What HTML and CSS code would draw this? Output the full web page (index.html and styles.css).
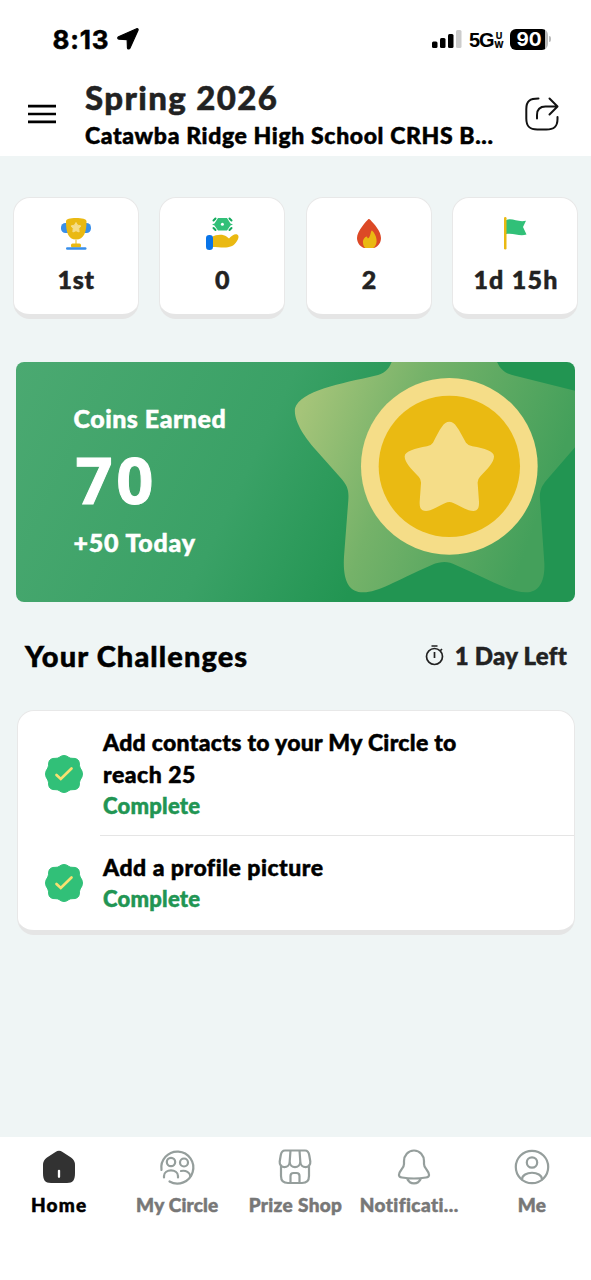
FILE: index.html
```html
<!DOCTYPE html>
<html lang="en">
<head>
<meta charset="utf-8">
<title>Spring 2026</title>
<link rel="stylesheet" href="styles.css">
</head>
<body>
<div class="app">
  <div class="status">
    <span class="time">8:13</span>
    <svg class="loc" width="22" height="22" viewBox="0 0 23 23"><path d="M20.500.7 1.600 9.200C.3 9.900.5 11.600 2 11.800l8.600.3.3 8.600c.2 1.500 2 1.700 2.600.4L22 2.400C22.500 1.100 21.600.3 20.500.7Z" stroke="#000" stroke-width="1.200"/></svg>
    <svg class="signal" width="30" height="20" viewBox="0 0 30 20"><rect x="0" y="12.500" width="5.500" height="6.500" rx="1.500"/><rect x="8" y="9" width="5.500" height="10" rx="1.500"/><rect x="16" y="5" width="5.500" height="14" rx="1.500"/><rect x="24" y="1" width="5.500" height="18" rx="1.500" fill="#ccc"/></svg>
    <span class="net">5G</span>
    <span class="uw"><span>U</span><span>W</span></span>
    <span class="battery">90</span>
    <span class="nub"></span>
  </div>
  <header class="header">
    <svg class="menu" width="28" height="20" viewBox="0 0 28 20"><path d="M0 2.200h28M0 10h28M0 17.800h28" stroke="#000" stroke-width="2.700"/></svg>
    <div class="titles">
      <h1 class="title">Spring 2026</h1>
      <div class="school">Catawba Ridge High School CRHS B...</div>
    </div>
    <svg class="share" width="34" height="34" viewBox="0 0 34 34" fill="none" stroke="#111" stroke-width="2" stroke-linecap="round" stroke-linejoin="round"><path d="M13.500 1.600C5 1.600 1.300 4 1.300 12v9.500c0 8 3.200 11 11 11h9c7.500 0 11.200-2.500 11.200-10.500v-2"/><path d="M12 21.500v-3.500c0-5.500 3-8.500 8.500-8.500h11.700M24.500 1.500l8 8-8 8"/></svg>
  </header>
  <main class="main">
    <section class="stats">
      <div class="stat">
        <svg width="34" height="34" viewBox="0 0 34 34"><rect x="2" y="7" width="30" height="10" rx="4.500" fill="#398fea"/><path d="M7 5.500C7 2.800 11 2 17 2s10.500.8 10.500 3.500C27.500 16 25 23.500 17 23.500S7 16 7 5.500Z" fill="#eab912"/><path d="M17 6.500l1.600 2.700 3.300.7-2.100 2.600.3 3.500-3.100-1.300-3.100 1.300.3-3.500-2.100-2.600 3.300-.7Z" fill="#f5dd88" stroke="#f5dd88" stroke-linejoin="round"/><path d="M16 23h2v5h-2z" fill="#f5dd88"/><rect x="12" y="27.500" width="10" height="4" rx="1.500" fill="#eab912"/><rect x="7" y="31.200" width="20.500" height="2.600" rx="1.200" fill="#398fea"/></svg>
        <b class="v1">1st</b>
      </div>
      <div class="stat">
        <svg width="34" height="34" viewBox="0 0 34 34"><path d="M13 2h9l3.500 5.500 2.500 1-2.500 1L22 14.500h-9L9.500 9.500 7 8.500l2.500-1Z" fill="#31c078"/><circle cx="17.400" cy="8.300" r="1.500" fill="#fff"/><path d="M8.500 4.500l2-2M24.500 2.500l2 2M8.500 12l2 2M24.500 14l2-2" stroke="#12a95c" stroke-width="2" stroke-linecap="round"/><path d="M7 21c4-2.500 11-3 14.500-.5l2.500 2c3-3 6-5.200 8.500-3.800 1.900 1.300.8 4.500-.5 6.300-5 9-14 6-25 6Z" fill="#eab912"/><rect x="1" y="19" width="7" height="15" rx="3.300" fill="#0874e8"/></svg>
        <b class="v2">0</b>
      </div>
      <div class="stat">
        <svg width="34" height="34" viewBox="0 0 34 34"><path d="M16.500 3C15 4.500 5 15 5 22c0 4 2.500 8.500 7 10h10c5-2 7-6 7-10 0-7-7-14-10.500-18-.7-.8-1.300-1.200-2-1Z" fill="#dc4926"/><path d="M20 14.500c-.8-.3-1.300 3-2 5-.6 1.700-1.700 3.500-2.500 2.500l-.5-1.500c-2 0-4.500 3-4 6.500.3 2.500 1 4 2.300 5h8c5.700-4.500 3.300-13-1.300-17.500Z" fill="#eab912"/></svg>
        <b class="v3">2</b>
      </div>
      <div class="stat">
        <svg width="34" height="34" viewBox="0 0 34 34"><path d="M7.500 4.500c6-3.500 12 2.200 20.500.2L25 11l3.500 7.500c-7 2.500-13-2-21-.2Z" fill="#31c078"/><rect x="6" y="1" width="2.500" height="32.500" rx="1.200" fill="#eab912"/></svg>
        <b class="v4">1d 15h</b>
      </div>
    </section>
    <section class="banner">
      <svg class="art" width="559" height="240" viewBox="0 0 559 240">
        <defs><linearGradient id="sg" gradientUnits="userSpaceOnUse" x1="60" y1="150" x2="790" y2="420"><stop offset="0" stop-color="#a5c479"/><stop offset=".4" stop-color="#75b269"/><stop offset="1" stop-color="#44a05b"/></linearGradient></defs>
        <g transform="translate(269 -12) scale(.33333)">
          <path fill="url(#sg)" d="M324 25C313 58 300 71 270 77C170 100 45 122 30 175C25 215 62 265 90 297L168 385C187 407 192 420 190 450L177 620C173 690 190 727 235 727C280 727 330 693 440 645C470 633 490 634 512 645C620 692 675 727 722 727C765 727 780 690 778 640L765 450C763 425 768 410 785 390L870 292L960 150L870 122L690 77C660 71 643 58 632 25Z"/>
          <circle cx="493" cy="349" r="265" fill="#f5dd88"/><circle cx="493" cy="349" r="212" fill="#eaba12"/>
          <path fill="#f5dd88" d="M493 215C510 215 520 235 543 278Q550 287 562 289C600 295 628 305 627 320C626 338 608 356 585 380Q577 388 578 400L582 455C583 475 577 483 565 483C550 483 530 471 505 459Q493 453 481 459C456 471 436 483 423 483C409 483 403 475 404 455L408 400Q409 388 401 380C378 356 360 338 359 320C358 305 390 295 426 289Q438 287 444 278C466 235 476 215 493 215Z"/>
        </g>
      </svg>
      <div class="coins-label">Coins Earned</div>
      <div class="coins">70</div>
      <div class="today">+50 Today</div>
    </section>
    <div class="section-head">
      <h2 class="h2">Your Challenges</h2>
      <svg class="timer" width="20" height="22" viewBox="0 0 20 22" fill="none" stroke="#222" stroke-width="1.700"><circle cx="9.500" cy="12.500" r="8"/><path d="M6.500 2h6M9.500 8v6M15 7l2-2"/></svg>
      <span class="left">1 Day Left</span>
    </div>
    <section class="list">
      <div class="item">
        <svg class="badge" width="40" height="40" viewBox="-20 -20 40 40"><use href="#seal"/></svg>
        <div class="body"><div class="name"><span class="n1">Add contacts to your My Circle to</span><br><span class="n2">reach 25</span></div><div class="done">Complete</div></div>
      </div>
      <div class="item second">
        <svg class="badge" width="40" height="40" viewBox="-20 -20 40 40"><g id="seal"><path fill="#31c078" stroke="#31c078" stroke-linejoin="round" d="M-5-16.500Q0-20.500 5-16.500Q6-15.700 8-15.700Q15-16 15.300-11Q15.300-8 16.200-6Q20.800 0 16.200 6Q15.300 8 15.300 11Q15 16 8 15.700Q6 15.700 5 16.500Q0 20.500-5 16.500Q-6 15.700-8 15.700Q-15 16-15.300 11Q-15.300 8-16.200 6Q-20.800 0-16.200-6Q-15.300-8-15.300-11Q-15-16-8-15.700Q-6-15.700-5-16.500Z"/><path d="M-7.500 1l4.300 4L7.500-5.500" fill="none" stroke="#f8e071" stroke-width="2.700" stroke-linecap="round"/></g></svg>
        <div class="body"><div class="name n3">Add a profile picture</div><div class="done">Complete</div></div>
      </div>
    </section>
  </main>
  <nav class="tabs">
    <div class="tab active"><svg width="36" height="36" viewBox="0 0 36 36"><path d="M14.500 3q3.500-2.500 7 0l8.500 5.500q4 2.700 4 7.500V24c0 7-2 10-8 10H10c-6 0-8-3-8-10v-8q0-4.800 4-7.500Z" fill="#323232"/><path d="M18 21.800v6" stroke="#fff" stroke-width="2.300" stroke-linecap="round"/></svg><span class="t1">Home</span></div>
    <div class="tab"><svg width="36" height="36" viewBox="0 0 36 36" class="line"><path d="M2.500 21A16 16 0 1 1 10.500 32.500"/><circle cx="12" cy="13" r="4.200"/><circle cx="25" cy="13.500" r="4"/><path d="M5 28.500v-1.500c0-7.500 14-7.500 14 0v1.500M22 22c5-1 9 1.500 9.500 5.500"/></svg><span class="t2">My Circle</span></div>
    <div class="tab"><svg width="36" height="36" viewBox="0 0 36 36" class="line"><path d="M8 1.500h20q3.500 0 4.300 5l1 6c.8 7.500-10 7.500-10 0 0 7.500-10.600 7.500-10.600 0 0 7.500-10.800 7.500-10 0l1-6q.8-5 4.300-5ZM12.700 12.500l.8-11M23.300 12.500l-.8-11"/><path d="M4 16.500V27q0 7 7 7h14q7 0 7-7V16.500M13.500 34v-7q0-3 3-3h3q3 0 3 3v7"/></svg><span class="t3">Prize Shop</span></div>
    <div class="tab"><svg width="36" height="36" viewBox="0 0 36 36" class="line"><path d="M18 1.500c-6 0-10 5-10 10.500v3q0 3-2.500 5.500c-3.500 4.500-3.500 7.500.5 8q12 2 24 0c4-.5 4-3.500.5-8Q28 18 28 15v-3C28 6.500 24 1.500 18 1.500ZM11 29.500c3 6.500 11 6.500 14 0"/></svg><span class="t4">Notificati...</span></div>
    <div class="tab"><svg width="36" height="36" viewBox="0 0 36 36" class="line"><circle cx="18" cy="18" r="16.200"/><circle cx="18" cy="13.500" r="5.200"/><path d="M8 30.500c0-9 20-9 20 0"/></svg><span class="t5">Me</span></div>
  </nav>
</div>
</body>
</html>
```
FILE: styles.css
```css
* { box-sizing: border-box; }
body { margin: 0; background: #fff; font-family: Lato, "Noto Sans", sans-serif; font-weight: 900; color: #000; -webkit-text-stroke: .5px currentColor; }
svg { display: block; flex: none; overflow: visible; }
.app { width: 591px; height: 1280px; display: flex; flex-direction: column; overflow: hidden; white-space: nowrap; }
.status { height: 78px; padding: 0 40px 0 52.500px; display: flex; align-items: center; font-family: Inter, sans-serif; font-weight: 700; }
.time { font-size: 26px; width: 64px; letter-spacing: .8px; }
.signal { margin-left: auto; }
.net { font-size: 20px; font-weight: 600; margin-left: 7px; width: 25px; font-family: "Liberation Sans", sans-serif; letter-spacing: -1px; margin-top: 2px; -webkit-text-stroke-width: 0; }
.uw { display: flex; flex-direction: column; align-items: center; font-size: 9px; line-height: 9px; width: 10px; margin-top: 2px; -webkit-text-stroke-width: .2px; }
.battery { margin-left: 6px; width: 38px; height: 21px; border-radius: 6px; background: linear-gradient(90deg, #000 92%, #bbb 92%); color: #fff; font-size: 19px; line-height: 21px; text-align: center; -webkit-text-stroke-width: 0; }
.nub { width: 2px; height: 6px; margin: 0 0 0 1px; border-radius: 0 2px 2px 0; background: #bbb; }
.header { height: 78px; padding: 0 32px 0 28px; display: flex; align-items: center; }
.menu { margin-top: -7px; }
.titles { margin: -4px 0 0 29px; flex: 1; }
.title { margin: 0; font-size: 33px; line-height: 39px; font-weight: 900; color: #222; letter-spacing: 1.350px; }
.school { font-size: 23px; line-height: 36px; letter-spacing: .63px; }
.share { margin-top: -6px; }
.main { flex: 1; background: #eff5f5; }
.stats { display: grid; grid-template-columns: repeat(4, 126px); justify-content: space-between; padding: 41px 12.500px 0 12.500px; }
.stat { height: 122px; border: 1.500px solid #e8e8e8; border-bottom: 5px solid #e5e5e5; border-radius: 17px; background: #fff; display: flex; flex-direction: column; align-items: center; padding-top: 18px; color: #222; }
.stat b { font-size: 25px; line-height: 30px; font-weight: 900; margin: 14px 0 0 1px; letter-spacing: .7px; }
.stat .v4 { letter-spacing: 1.200px; }
.banner { position: relative; margin: 43px 16px 0; height: 240px; border-radius: 8px; overflow: hidden; padding: 38.500px 0 0 57.500px; color: #fff; background: linear-gradient(116deg, #4ba971 0%, #3aa166 42%, #229552 66%); }
.art { position: absolute; inset: 0; }
.coins-label, .today { font-size: 25px; line-height: 34px; letter-spacing: .5px; }
.today { letter-spacing: .8px; }
.coins { font-size: 65px; line-height: 80px; margin: 4px 0 6.500px 2px; font-family: "Open Sans", sans-serif; font-weight: 700; letter-spacing: 3.500px; -webkit-text-stroke-width: 1px; }
.section-head { display: flex; align-items: center; height: 40px; margin: 33px 24px 0 25px; }
.h2 { font-size: 29px; margin: 0; font-weight: 900; letter-spacing: 1.100px; }
.timer { margin-left: auto; }
.left { font-size: 24px; color: #222; margin-left: 10px; letter-spacing: .25px; }
.list { margin: 35px 16.500px 0; height: 225px; border: 1.500px solid #e8e8e8; border-bottom: 5px solid #e5e5e5; border-radius: 17px; background: #fff; padding-left: 26px; }
.item { display: flex; align-items: center; height: 125px; }
.second { height: 94px; }
.badge { margin-right: 16px; }
.body { flex: 1; height: 100%; padding: 14.500px 0 0 3.500px; border-bottom: 1.500px solid #e5e5e5; }
.second .body { border: 0; }
.name { font-size: 23px; line-height: 32px; letter-spacing: .5px; }
.n1 { letter-spacing: .29px; }
.done { font-size: 22px; line-height: 31px; color: #219553; letter-spacing: .25px; }
.tabs { height: 143px; display: grid; grid-template-columns: repeat(5, 1fr); padding-top: 12px; }
.tab { display: flex; flex-direction: column; align-items: center; font-size: 19px; line-height: 24px; gap: 8px; color: #777; letter-spacing: .2px; }
.active { color: #000; letter-spacing: 1.200px; }
.t3 { letter-spacing: .35px; }
.t4 { letter-spacing: .4px; margin-right: 9px; }
.line { fill: none; stroke: #959e9c; stroke-width: 2.200; stroke-linecap: round; stroke-linejoin: round; }
```
